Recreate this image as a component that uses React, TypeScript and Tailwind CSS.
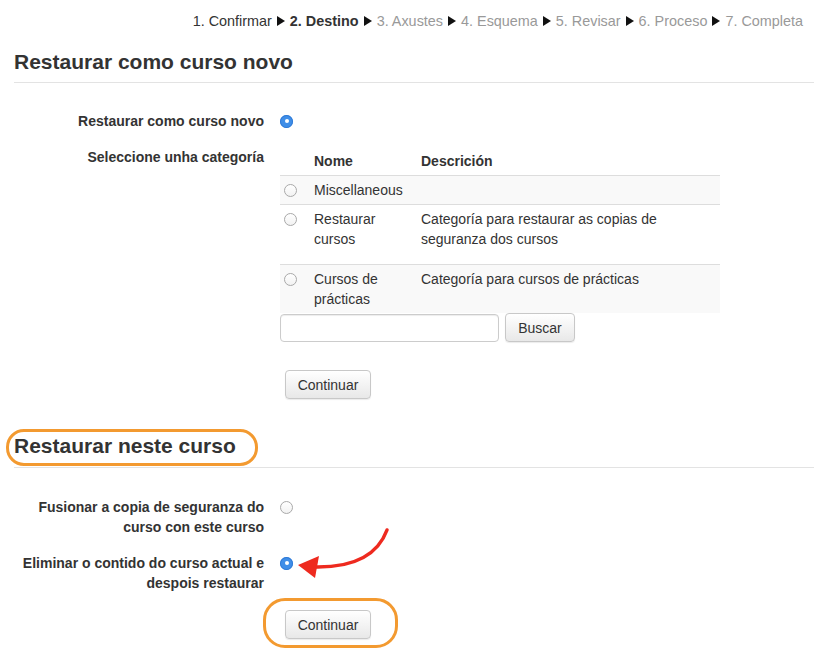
import React from "react";

function Tri() {
  return (
    <svg width="8" height="10" viewBox="0 0 8 10" className="mx-[5px] shrink-0">
      <path d="M0 0 L8 5 L0 10 Z" fill="#111" />
    </svg>
  );
}

function Radio({ checked }: { checked?: boolean }) {
  if (checked) {
    return (
      <span className="inline-flex w-[13px] h-[13px] rounded-full bg-[#3f8ee8] items-center justify-center shadow-[inset_0_0_0_1px_#2f7ad6]">
        <span className="w-[4px] h-[4px] rounded-full bg-white" />
      </span>
    );
  }
  return (
    <span className="inline-block w-[13px] h-[13px] rounded-full border border-[#a9a9a9] bg-gradient-to-b from-white to-[#f2f2f2]" />
  );
}

function Btn({ children, w }: { children: React.ReactNode; w: string }) {
  return (
    <button
      className={`h-[29px] ${w} rounded-[4px] border border-[#c8c8c8] bg-gradient-to-b from-white to-[#e8e8e8] text-[14px] text-[#333] shadow-[0_1px_1px_rgba(0,0,0,0.08)] flex items-center justify-center`}
    >
      {children}
    </button>
  );
}

export default function App() {
  return (
    <div
      className="relative w-[814px] h-[659px] bg-white overflow-hidden text-[#333] text-[14px] leading-[20px]"
      style={{ fontFamily: '"Liberation Sans", Arial, Helvetica, sans-serif' }}
    >
      {/* breadcrumb */}
      <div className="flex items-center justify-end pr-[11px] pt-[11px] whitespace-nowrap text-[14.4px]">
        <span>1. Confirmar</span>
        <Tri />
        <span className="font-bold">2. Destino</span>
        <Tri />
        <span className="text-[#999]">3. Axustes</span>
        <Tri />
        <span className="text-[#999]">4. Esquema</span>
        <Tri />
        <span className="text-[#999]">5. Revisar</span>
        <Tri />
        <span className="text-[#999]">6. Proceso</span>
        <Tri />
        <span className="text-[#999]">7. Completa</span>
      </div>

      <div className="pl-[14px]">
        {/* heading 1 */}
        <h2 className="mt-[16px] text-[21px] leading-[30px] font-bold pb-[5px] border-b border-[#e3e3e3]">
          Restaurar como curso novo
        </h2>

        {/* row 1 */}
        <div className="flex mt-[28px]">
          <div className="w-[250px] text-right font-bold">Restaurar como curso novo</div>
          <div className="ml-[16px] flex items-center h-[20px]">
            <Radio checked />
          </div>
        </div>

        {/* row 2 */}
        <div className="flex mt-[16px]">
          <div className="w-[250px] text-right font-bold">Seleccione unha categoría</div>
          <div className="ml-[16px] w-[440px]">
            <table className="w-[440px] border-collapse table-fixed">
              <colgroup>
                <col className="w-[30px]" />
                <col className="w-[107px]" />
                <col />
              </colgroup>
              <thead>
                <tr>
                  <th className="p-[4px]" />
                  <th className="p-[4px] text-left font-bold">Nome</th>
                  <th className="p-[4px] text-left font-bold">Descrición</th>
                </tr>
              </thead>
              <tbody>
                <tr className="bg-[#f9f9f9] border-t border-[#dddddd]">
                  <td className="px-[4px] pt-[4px] pb-[4px] align-top">
                    <div className="h-[20px] flex items-center"><Radio /></div>
                  </td>
                  <td className="p-[4px] align-top">Miscellaneous</td>
                  <td className="p-[4px] align-top" />
                </tr>
                <tr className="border-t border-[#dddddd]">
                  <td className="p-[4px] align-top">
                    <div className="h-[20px] flex items-center"><Radio /></div>
                  </td>
                  <td className="p-[4px] align-top">Restaurar<br />cursos</td>
                  <td className="p-[4px] align-top">
                    <div className="mb-[11px]">Categoría para restaurar as copias de<br />seguranza dos cursos</div>
                  </td>
                </tr>
                <tr className="bg-[#f9f9f9] border-t border-[#dddddd]">
                  <td className="p-[4px] align-top">
                    <div className="h-[20px] flex items-center"><Radio /></div>
                  </td>
                  <td className="p-[4px] align-top">Cursos de<br />prácticas</td>
                  <td className="p-[4px] align-top">
                    <div className="mb-[10px]">Categoría para cursos de prácticas</div>
                  </td>
                </tr>
              </tbody>
            </table>
            <div className="flex items-center gap-[6px]">
              <input className="w-[219px] h-[28px] rounded-[4px] border border-[#cccccc] bg-white shadow-[inset_0_1px_1px_rgba(0,0,0,0.075)]" />
              <Btn w="w-[70px]">Buscar</Btn>
            </div>
            <div className="mt-[28px] ml-[5px]">
              <Btn w="w-[86px]">Continuar</Btn>
            </div>
          </div>
        </div>

        {/* heading 2 */}
        <h2 className="mt-[32px] text-[21px] leading-[30px] font-bold pb-[6px] border-b border-[#e3e3e3]">
          Restaurar neste curso
        </h2>

        <div className="flex mt-[29px]">
          <div className="w-[250px] text-right font-bold">
            Fusionar a copia de seguranza do<br />curso con este curso
          </div>
          <div className="ml-[16px] flex items-center h-[20px]">
            <Radio />
          </div>
        </div>

        <div className="flex mt-[16px]">
          <div className="w-[250px] text-right font-bold">
            Eliminar o contido do curso actual e<br />despois restaurar
          </div>
          <div className="ml-[16px] flex items-center h-[20px]">
            <Radio checked />
          </div>
        </div>

        <div className="flex mt-[17px]">
          <div className="w-[250px]" />
          <div className="ml-[21px]">
            <Btn w="w-[86px]">Continuar</Btn>
          </div>
        </div>
      </div>

      {/* annotations */}
      <div className="absolute left-[6px] top-[429px] w-[252px] h-[37px] rounded-[18px] border-[3px] border-[#f39a30] pointer-events-none" />
      <div className="absolute left-[263px] top-[598px] w-[135px] h-[50px] rounded-[22px] border-[3px] border-[#f39a30] pointer-events-none" />
      <svg className="absolute left-0 top-0 pointer-events-none" width="814" height="659">
        <path d="M387 530 Q 373 568 315 567" stroke="#ee2a1f" strokeWidth="3.5" fill="none" strokeLinecap="round" />
        <path d="M298 565 L319 556 L315 578 Z" fill="#ee2a1f" />
      </svg>
    </div>
  );
}
